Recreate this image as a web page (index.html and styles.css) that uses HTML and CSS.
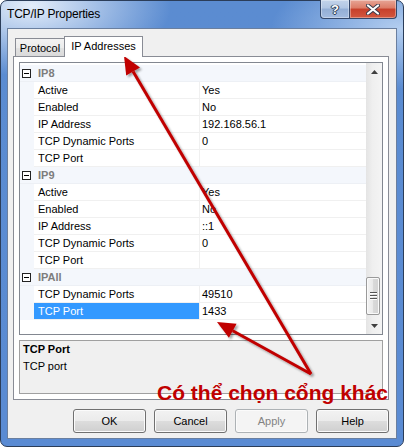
FILE: index.html
```html
<!DOCTYPE html>
<html>
<head>
<meta charset="utf-8">
<link rel="stylesheet" href="styles.css">
</head>
<body>
<div class="window">
  <div class="titlebar">
    <span class="title">TCP/IP Properties</span>
    <div class="ctrls">
      <div class="cbtn cbtn-help"><span class="qmark">?</span></div>
      <div class="cbtn cbtn-close">
        <svg width="14" height="11" viewBox="0 0 14 11"><path d="M2 1.5 L12 9.5 M12 1.5 L2 9.5" stroke="#3a3a4a" stroke-width="4" stroke-linecap="round"/><path d="M2 1.5 L12 9.5 M12 1.5 L2 9.5" stroke="#ffffff" stroke-width="2.2" stroke-linecap="round"/></svg>
      </div>
    </div>
  </div>
  <div class="client">
    <div class="tabs">
      <div class="tab tab-off">Protocol</div>
      <div class="tab tab-on">IP Addresses</div>
    </div>
    <div class="panel">
      <div class="grid">
        <div class="rows">
          <div class="row cat"><span class="box"></span><span class="catname">IP8</span></div>
          <div class="row"><span class="gutter"></span><span class="name">Active</span><span class="val">Yes</span></div>
          <div class="row"><span class="gutter"></span><span class="name">Enabled</span><span class="val">No</span></div>
          <div class="row"><span class="gutter"></span><span class="name">IP Address</span><span class="val">192.168.56.1</span></div>
          <div class="row"><span class="gutter"></span><span class="name">TCP Dynamic Ports</span><span class="val">0</span></div>
          <div class="row"><span class="gutter"></span><span class="name">TCP Port</span><span class="val"></span></div>
          <div class="row cat"><span class="box"></span><span class="catname">IP9</span></div>
          <div class="row"><span class="gutter"></span><span class="name">Active</span><span class="val">Yes</span></div>
          <div class="row"><span class="gutter"></span><span class="name">Enabled</span><span class="val">No</span></div>
          <div class="row"><span class="gutter"></span><span class="name">IP Address</span><span class="val">::1</span></div>
          <div class="row"><span class="gutter"></span><span class="name">TCP Dynamic Ports</span><span class="val">0</span></div>
          <div class="row"><span class="gutter"></span><span class="name">TCP Port</span><span class="val"></span></div>
          <div class="row cat"><span class="box"></span><span class="catname">IPAll</span></div>
          <div class="row"><span class="gutter"></span><span class="name">TCP Dynamic Ports</span><span class="val">49510</span></div>
          <div class="row"><span class="gutter"></span><span class="name sel">TCP Port</span><span class="val">1433</span></div>
        </div>
        <div class="vscroll">
          <div class="sbtn"><svg width="7" height="4" viewBox="0 0 7 4"><path d="M0 4 L3.5 0 L7 4 Z" fill="#404040"/></svg></div>
          <div class="track">
            <div class="thumb"><span class="grip"></span><span class="grip"></span><span class="grip"></span></div>
          </div>
          <div class="sbtn"><svg width="7" height="4" viewBox="0 0 7 4"><path d="M0 0 L7 0 L3.5 4 Z" fill="#404040"/></svg></div>
        </div>
      </div>
      <div class="desc">
        <div class="desc-title">TCP Port</div>
        <div>TCP port</div>
      </div>
    </div>
    <div class="buttons">
      <div class="btn">OK</div>
      <div class="btn">Cancel</div>
      <div class="btn btn-dis">Apply</div>
      <div class="btn">Help</div>
    </div>
  </div>
</div>
<svg class="arrows" width="404" height="447" viewBox="0 0 404 447">
  <defs>
    <filter id="sh" x="-20%" y="-20%" width="140%" height="140%">
      <feDropShadow dx="2" dy="2" stdDeviation="1.3" flood-color="#000" flood-opacity="0.35"/>
    </filter>
  </defs>
  <g filter="url(#sh)">
    <line x1="311" y1="374" x2="133.1" y2="71.5" stroke="#c00000" stroke-width="3"/>
    <polygon points="124,56 140,67.4 126.2,75.6" fill="#c00000"/>
    <line x1="311" y1="374" x2="232.7" y2="330.7" stroke="#c00000" stroke-width="3"/>
    <polygon points="217,322 236.6,323.7 228.9,337.7" fill="#c00000"/>
  </g>
</svg>
<div class="annot">Có thể chọn cổng khác</div>
</body>
</html>
```
FILE: styles.css
```css
* { box-sizing: border-box; }
html, body { margin: 0; padding: 0; }
body {
  width: 404px;
  height: 447px;
  overflow: hidden;
  position: relative;
  background: #ffffff;
  font-family: "Liberation Sans", Arial, sans-serif;
  font-size: 11px;
  color: #000;
}
.window {
  width: 404px;
  height: 447px;
  border: 1px solid #2b3d59;
  border-radius: 7px;
  padding: 0 6px 7px 6px;
  display: flex;
  flex-direction: column;
  background:
    radial-gradient(ellipse 140px 70px at 30px 5px, rgba(236,243,252,0.95), rgba(236,243,252,0) 100%),
    radial-gradient(ellipse 130px 60px at 400px 28px, rgba(196,218,245,0.85), rgba(196,218,245,0) 100%),
    linear-gradient(#5b8cd1, #5a8bd3);
}
.titlebar {
  height: 27px;
  display: flex;
  align-items: flex-start;
}
.title {
  margin-top: 6px;
  font-size: 12px;
  letter-spacing: -0.2px;
  color: #000;
  line-height: 15px;
}
.ctrls {
  margin-left: auto;
  margin-top: -1px;
  display: flex;
}
.cbtn {
  height: 19px;
  border: 1px solid #34486a;
  border-top: none;
  display: flex;
  align-items: center;
  justify-content: center;
  box-shadow: inset 0 0 0 1px rgba(255,255,255,0.35);
}
.cbtn-help {
  width: 29px;
  border-right: none;
  border-bottom-left-radius: 4px;
  background: linear-gradient(#c3d4ea, #b1c6e3 45%, #93aed5 50%, #a3bce0);
}
.qmark {
  font-weight: bold;
  font-size: 13px;
  color: #fff;
  text-shadow: 0 0 1px #2f3f57, 0 0 1px #2f3f57, 1px 0 0 #2f3f57, -1px 0 0 #2f3f57, 0 1px 0 #2f3f57;
  line-height: 15px;
}
.cbtn-close {
  width: 48px;
  border-bottom-right-radius: 4px;
  background: linear-gradient(#e7a596, #dc7b66 45%, #c7402b 50%, #d2573f);
}
.client {
  flex: 1;
  border: 1px solid #6a7f9f;
  background: #f0f0f0;
  display: flex;
  flex-direction: column;
  padding: 7px 0 5px 0;
}
.tabs {
  height: 20px;
  display: flex;
  align-items: flex-end;
  padding-left: 7px;
}
.tab {
  border: 1px solid #898c95;
  border-bottom: none;
  display: flex;
  align-items: center;
  justify-content: center;
}
.tab-off {
  width: 50px;
  height: 18px;
  background: linear-gradient(#f3f3f3, #ececec 50%, #e2e2e2 50%, #dadada);
}
.tab-on {
  width: 79px;
  height: 21px;
  margin-left: -1px;
  margin-bottom: -1px;
  padding-bottom: 2px;
  background: #ffffff;
  position: relative;
  z-index: 1;
}
.panel {
  height: 344px;
  margin: 0 7px 0 5px;
  border: 1px solid #898c95;
  background: #ffffff;
  padding: 5px;
  display: flex;
  flex-direction: column;
  gap: 5px;
}
.grid {
  height: 273px;
  border: 1px solid #828790;
  display: flex;
  background: #fff;
}
.rows {
  width: 346px;
  padding-top: 2px;
}
.row {
  display: flex;
  height: 17px;
  line-height: 16px;
}
.cat {
  background: #f4f7fc;
  border-bottom: 1px solid #edf0f5;
  align-items: center;
}
.box {
  width: 9px;
  height: 9px;
  margin-left: 2px;
  border: 1px solid #222;
  background: #fff;
  position: relative;
}
.box::after {
  content: "";
  position: absolute;
  left: 1px;
  top: 3px;
  width: 5px;
  height: 1px;
  background: #000;
}
.catname {
  margin-left: 7px;
  font-weight: bold;
  color: #7d7d7d;
}
.gutter {
  width: 14px;
  background: #f4f7fc;
}
.name {
  width: 166px;
  padding-left: 4px;
  border-bottom: 1px solid #f0f0f0;
  border-right: 1px solid #f0f0f0;
  white-space: nowrap;
}
.name.sel {
  background: #3399ff;
  color: #fff;
}
.val {
  flex: 1;
  padding-left: 2px;
  border-bottom: 1px solid #f0f0f0;
}
.vscroll {
  width: 16px;
  display: flex;
  flex-direction: column;
  background: linear-gradient(to right, #e4e4e4, #efefef 40%, #f4f4f4);
}
.sbtn {
  height: 17px;
  display: flex;
  align-items: center;
  justify-content: center;
}
.track {
  flex: 1;
}
.thumb {
  margin-top: 197px;
  margin-left: 0;
  width: 14px;
  height: 38px;
  border: 1px solid #9a9a9a;
  border-radius: 2px;
  background: linear-gradient(to right, #f4f4f4, #e9e9e9 50%, #dadada 50%, #d3d3d3);
  box-shadow: inset 0 0 0 1px #fafafa;
  display: flex;
  flex-direction: column;
  align-items: center;
  justify-content: center;
  gap: 1px;
}
.grip {
  width: 7px;
  height: 2px;
  border-top: 1px solid #555;
  border-bottom: 1px solid #fff;
}
.desc {
  height: 54px;
  border: 1px solid #a0a0a0;
  background: #f0f0f0;
  padding: 0 3px;
  line-height: 17px;
}
.desc-title {
  font-weight: bold;
}
.buttons {
  height: 24px;
  margin-top: 9px;
  padding-right: 7px;
  display: flex;
  justify-content: flex-end;
  gap: 8px;
}
.btn {
  width: 73px;
  height: 24px;
  border: 1px solid #707070;
  border-radius: 3px;
  background: linear-gradient(#f2f2f2, #ebebeb 50%, #dddddd 50%, #cfcfcf);
  box-shadow: inset 0 0 0 1px #fbfbfb;
  display: flex;
  align-items: center;
  justify-content: center;
}
.btn-dis {
  border-color: #adb2b5;
  background: #f4f4f4;
  color: #838383;
}
.arrows {
  position: absolute;
  left: 0;
  top: 0;
  pointer-events: none;
}
.annot {
  position: absolute;
  left: 157px;
  top: 382px;
  font-size: 21px;
  line-height: 21px;
  font-weight: bold;
  color: #c00000;
  white-space: nowrap;
}
```
